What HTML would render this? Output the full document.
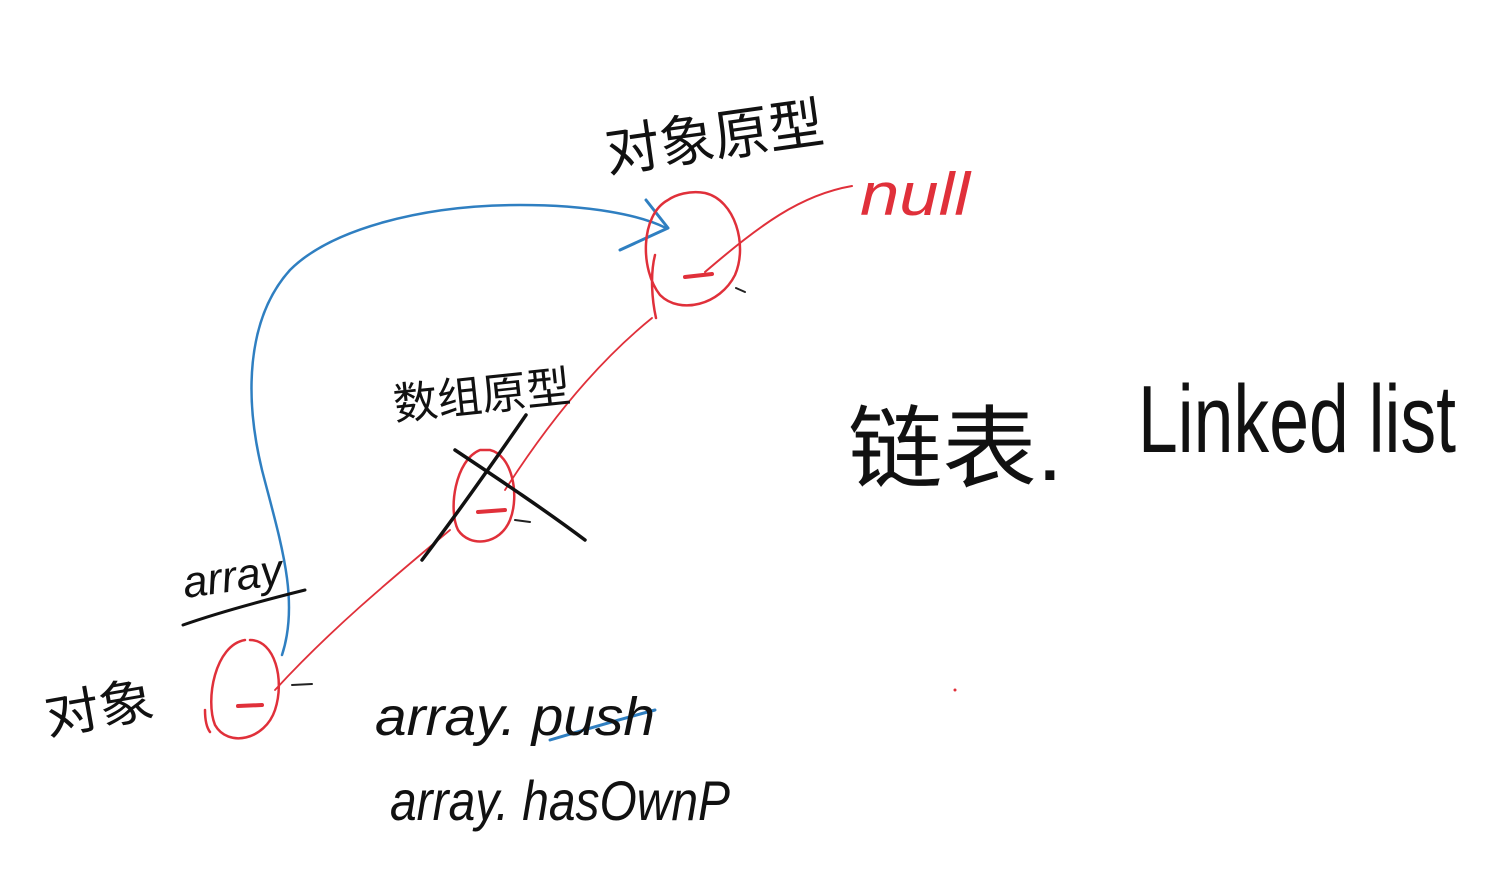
<!DOCTYPE html>
<html><head><meta charset="utf-8"><style>
html,body{margin:0;padding:0;background:#fff;width:1495px;height:870px;overflow:hidden}
svg{display:block}
text{font-family:"Liberation Sans","Noto Sans CJK SC",sans-serif;}
</style></head><body>
<svg width="1495" height="870" viewBox="0 0 1495 870" xmlns="http://www.w3.org/2000/svg">
<g fill="none" stroke-linecap="round" stroke-linejoin="round">
<path d="M282 655 C300 600 280 540 262 470 C245 400 245 320 290 270 C330 230 420 205 520 205 C590 205 640 215 666 228" stroke="#2f7fc1" stroke-width="2.5"/>
<path d="M620 250 L668 228 L646 200" stroke="#2f7fc1" stroke-width="3"/>
<path d="M550 740 C590 728 625 718 655 710" stroke="#2f7fc1" stroke-width="3"/>
<path d="M852 186 C800 195 760 225 705 272" stroke="#e0303a" stroke-width="2"/>
<path d="M652 318 C600 360 550 420 505 490" stroke="#e0303a" stroke-width="1.8"/>
<path d="M450 530 C390 580 330 630 275 690" stroke="#e0303a" stroke-width="1.8"/>
<path d="M668 200 C640 215 640 270 660 295 C680 315 720 305 735 275 C748 245 735 200 705 193 C690 190 675 195 668 200 M655 255 C650 275 652 300 656 318" stroke="#e0303a" stroke-width="2.5"/>
<path d="M480 450 C455 460 448 510 458 530 C470 548 500 545 510 520 C520 495 512 455 490 450 Z" stroke="#e0303a" stroke-width="2.5"/>
<path d="M245 640 C215 645 205 700 215 725 C228 748 265 740 275 710 C285 680 275 640 250 640 M205 710 C205 720 207 728 210 732" stroke="#e0303a" stroke-width="2.5"/>
<path d="M685 277 L712 274 M478 512 L505 510 M238 706 L262 705" stroke="#e0303a" stroke-width="4"/>
<path d="M736 288 L745 292 M515 520 L530 522 M292 685 L312 684" stroke="#222" stroke-width="2"/>
<circle cx="955" cy="690" r="1.5" fill="#e0303a" stroke="none"/>
<path d="M422 560 C460 510 495 460 526 415" stroke="#111" stroke-width="3.5"/>
<path d="M455 450 C500 480 545 510 585 540" stroke="#111" stroke-width="3.5"/>
<path d="M183 625 C220 612 265 600 305 590" stroke="#111" stroke-width="3"/>
</g>
<g fill="#111">
<text x="608" y="172" font-size="56" transform="rotate(-8 608 172)" textLength="220" lengthAdjust="spacingAndGlyphs">对象原型</text>
<text x="395" y="420" font-size="44" transform="rotate(-6 395 420)" textLength="178" lengthAdjust="spacingAndGlyphs">数组原型</text>
<text x="185" y="598" font-size="44" font-style="italic" transform="rotate(-8 185 598)" textLength="100" lengthAdjust="spacingAndGlyphs">array</text>
<text x="48" y="735" font-size="50" transform="rotate(-10 48 735)" textLength="110" lengthAdjust="spacingAndGlyphs">对象</text>
<text x="375" y="735" font-size="54" font-style="italic" font-family="Liberation Serif" textLength="280" lengthAdjust="spacingAndGlyphs">array. push</text>
<text x="390" y="820" font-size="56" font-style="italic" font-family="Liberation Serif" textLength="340" lengthAdjust="spacingAndGlyphs">array. hasOwnP</text>
<text x="848" y="480" font-size="90" textLength="215" lengthAdjust="spacingAndGlyphs">链表.</text>
<text x="1138" y="452" font-size="96" textLength="318" lengthAdjust="spacingAndGlyphs">Linked list</text>
</g>
<text x="860" y="215" font-size="60" fill="#e0303a" font-style="italic" font-family="Liberation Serif" textLength="110" lengthAdjust="spacingAndGlyphs">null</text>
</svg>
</body></html>
